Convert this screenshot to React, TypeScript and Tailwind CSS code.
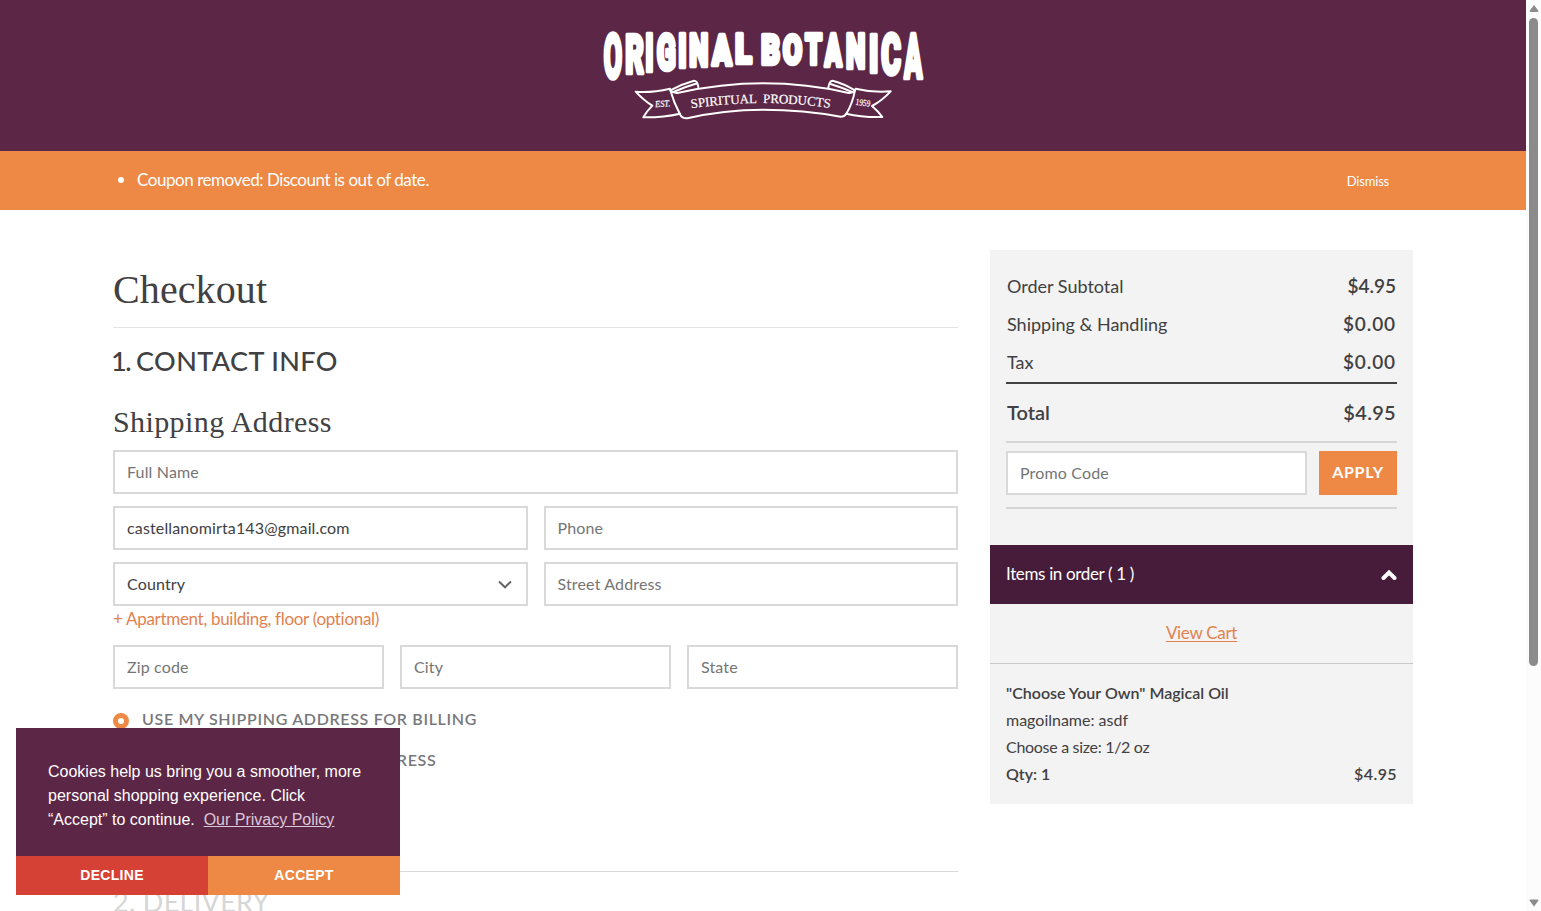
import React from "react";

type Letter = { ch: string; x: number; w: number; bottom: number };

const wordmark: Letter[] = [
  { ch: "O", x: 41, w: 55, bottom: 180 },
  { ch: "R", x: 106, w: 56, bottom: 167 },
  { ch: "I", x: 166, w: 25, bottom: 160 },
  { ch: "G", x: 200, w: 57, bottom: 156 },
  { ch: "I", x: 265, w: 25, bottom: 149 },
  { ch: "N", x: 298, w: 57, bottom: 146 },
  { ch: "A", x: 367, w: 58, bottom: 141 },
  { ch: "L", x: 436, w: 49, bottom: 137 },
  { ch: "B", x: 514, w: 56, bottom: 138 },
  { ch: "O", x: 579, w: 57, bottom: 138 },
  { ch: "T", x: 646, w: 50, bottom: 140 },
  { ch: "A", x: 704, w: 51, bottom: 145 },
  { ch: "N", x: 768, w: 58, bottom: 152 },
  { ch: "I", x: 837, w: 28, bottom: 162 },
  { ch: "C", x: 874, w: 59, bottom: 170 },
  { ch: "A", x: 943, w: 54, bottom: 180 },
];

function Logo() {
  return (
    <svg width="350" height="110" viewBox="-6 0 1050 330" fill="none">
      <g fill="#fff" stroke="#fff" strokeWidth="14" strokeLinejoin="round" fontFamily="Roboto" fontWeight="900">
        {wordmark.map((l, i) => (
          <text
            key={i}
            x={l.x}
            y={l.bottom - 7}
            fontSize={(l.bottom - 51) / 0.711}
            textLength={l.w}
            lengthAdjust="spacingAndGlyphs"
          >
            {l.ch}
          </text>
        ))}
      </g>
      <g stroke="#fff" strokeWidth="6" strokeLinejoin="round" strokeLinecap="round">
        <path d="M241 211 Q250 220 262 219 Q395 190 520 190 Q650 190 776 219 Q788 219 795 211 Q787 252 769 281 Q764 291 752 290 Q640 269 520 269 Q400 269 292 295 Q276 296 270 283 Q252 250 241 211Z" />
        <path d="M241 211 Q275 192 312 182 Q322 182 325 201 M250 216 Q284 201 322 190" />
        <path d="M795 211 Q762 191 728 182 Q718 182 715 203 M786 216 Q756 202 719 191" />
        <path d="M240 206 Q184 219 137 215 Q162 242 187 257 Q170 274 160 292 Q218 293 270 281" />
        <path d="M797 206 Q852 219 902 214 Q876 242 846 258 Q866 275 877 291 Q821 293 768 281" />
      </g>
      <defs>
        <path id="tagline-curve" d="M304 265 Q515 234 722 264" />
      </defs>
      <g fill="#fff" stroke="#fff" strokeWidth="0.6" fontFamily="'Liberation Serif', serif">
        <text fontSize="39" wordSpacing="10" textLength="418" lengthAdjust="spacing">
          <textPath href="#tagline-curve" textLength="418" lengthAdjust="spacing">
            SPIRITUAL PRODUCTS
          </textPath>
        </text>
        <text x="196" y="262" fontSize="28" fontStyle="italic" textLength="46" lengthAdjust="spacingAndGlyphs" transform="rotate(-4 196 262)">
          EST.
        </text>
        <text x="796" y="254" fontSize="28" textLength="44" lengthAdjust="spacingAndGlyphs" transform="rotate(8 796 254)">
          1959
        </text>
      </g>
    </svg>
  );
}

function Field({ label, filled = false, children }: { label: string; filled?: boolean; children?: React.ReactNode }) {
  return (
    <div
      className={
        "flex h-11 min-w-0 flex-1 items-center justify-between border-2 border-[#d9d9d9] bg-white px-3 pb-px text-base tracking-[0.15px] " +
        (filled ? "text-[#414042]" : "text-[#757575]")
      }
    >
      <span>{label}</span>
      {children}
    </div>
  );
}

function SummaryRow({ label, value, wide = false }: { label: string; value: string; wide?: boolean }) {
  return (
    <div className="flex h-[38px] items-center justify-between px-px pb-0.5 text-lg">
      <span>{label}</span>
      <span className={"text-[19px] font-semibold " + (wide ? "tracking-[0.9px]" : "")}>{value}</span>
    </div>
  );
}

function Scrollbar() {
  return (
    <div className="flex h-full w-[15px] shrink-0 flex-col items-center justify-between bg-[#fcfcfc] py-1">
      <div className="flex flex-col items-center gap-1.5">
        <svg width="10" height="8" viewBox="0 0 10 8">
          <path d="M5 1 L9.5 7 Q9.5 8 8 8 H2 Q0.5 8 0.5 7Z" fill="#8b8b8b" />
        </svg>
        <div className="h-[648px] w-[9px] rounded-full bg-[#8b8b8b]" />
      </div>
      <svg width="10" height="8" viewBox="0 0 10 8">
        <path d="M5 7.5 L0.5 1.5 Q0.5 0.5 2 0.5 H8 Q9.5 0.5 9.5 1.5Z" fill="#8b8b8b" />
      </svg>
    </div>
  );
}

function CookieNotice() {
  return (
    <div className="absolute top-[728px] left-4 flex h-[167px] w-96 flex-col bg-[#5c2646] font-['Liberation_Sans',sans-serif] text-white">
      <p className="flex-1 px-8 pt-8 text-base leading-6">
        Cookies help us bring you a smoother, more
        <br />
        personal shopping experience. Click
        <br />
        “Accept” to continue.&nbsp; <a className="text-[#dcc8d8] underline">Our Privacy Policy</a>
      </p>
      <div className="flex h-[39px] text-sm font-bold tracking-[0.3px]">
        <button className="flex-1 bg-[#d54135] pb-0.5">DECLINE</button>
        <button className="flex-1 bg-[#ee8845] pb-0.5">ACCEPT</button>
      </div>
    </div>
  );
}

export default function App() {
  return (
    <div className="relative flex h-[911px] w-[1541px] overflow-hidden bg-white font-['Lato',sans-serif] text-[#414042]">
      <div className="flex h-full w-[1526px] flex-col overflow-hidden">
        <header className="flex h-[151px] shrink-0 justify-center bg-[#5c2646] pt-5">
          <Logo />
        </header>

        <div className="flex h-[59px] shrink-0 items-center justify-between bg-[#ee8845] pr-[137px] pl-[118px] text-white">
          <div className="flex items-center gap-[13px] pb-px text-[17px]">
            <span className="size-1.5 rounded-full bg-white" />
            <span className="tracking-[-0.45px]">Coupon removed: Discount is out of date.</span>
          </div>
          <span className="pt-0.5 text-[13px] tracking-[-0.2px]">Dismiss</span>
        </div>

        <main className="flex items-start gap-8 px-[113px] pt-10">
          <section className="w-[845px] shrink-0">
            <h1 className="flex h-[78px] items-center border-b border-[#e4e4e4] pt-0.5 font-['Liberation_Serif',serif] text-[40px] tracking-[0.1px]">
              Checkout
            </h1>
            <h2 className="flex h-[67px] items-center gap-1.5 text-[27px] font-medium">
              <span className="-ml-0.5 tracking-[-1.5px]">1.</span>
              <span className="tracking-[0.4px]">CONTACT INFO</span>
            </h2>
            <h3 className="flex h-[55px] items-center pb-0.5 font-['Liberation_Serif',serif] text-[30px] tracking-[0.4px]">
              Shipping Address
            </h3>

            <div className="flex flex-col gap-3">
              <div className="flex">
                <Field label="Full Name" />
              </div>
              <div className="flex gap-4">
                <Field label="castellanomirta143@gmail.com" filled />
                <Field label="Phone" />
              </div>
              <div className="flex gap-4">
                <Field label="Country" filled>
                  <svg width="14" height="9" viewBox="0 0 14 9" className="mt-0.5 mr-0.5">
                    <path d="M1 1.5 L7 7.3 L13 1.5" fill="none" stroke="#666" strokeWidth="2" />
                  </svg>
                </Field>
                <Field label="Street Address" />
              </div>
            </div>

            <a className="flex h-[39px] items-start text-[17px] tracking-[-0.31px] text-[#e2824f]">
              + Apartment, building, floor (optional)
            </a>

            <div className="flex gap-4">
              <Field label="Zip code" />
              <Field label="City" />
              <Field label="State" />
            </div>

            <div className="flex flex-col pt-[9px] text-base text-[#77787b]">
              <div className="flex h-[41px] items-center gap-[13px]">
                <span className="mt-1 size-4 rounded-full border-[5px] border-[#ee8845] bg-white" />
                <span className="font-semibold tracking-[0.67px]">USE MY SHIPPING ADDRESS FOR BILLING</span>
              </div>
              <div className="flex h-[41px] items-center gap-[13px]">
                <span className="size-4 rounded-full border-2 border-[#d9d9d9] bg-white" />
                <span className="font-semibold tracking-[0.72px]">USE A DIFFERENT BILLING ADDRESS</span>
              </div>
            </div>

            <h2 className="mt-[91px] flex h-10 items-start border-t border-[#d9d9d9] pt-2.5 text-[27px] tracking-[0.3px] text-[#d6d6d6]">
              2. DELIVERY
            </h2>
          </section>

          <aside className="h-[554px] w-[423px] shrink-0 bg-[#f3f3f3]">
            <div className="flex h-[295px] flex-col px-4 pt-[18px]">
              <div className="border-b-2 border-[#414042]">
                <SummaryRow label="Order Subtotal" value="$4.95" />
                <SummaryRow label="Shipping & Handling" value="$0.00" wide />
                <SummaryRow label="Tax" value="$0.00" wide />
              </div>
              <div className="flex h-[59px] items-center justify-between border-b-2 border-[#d5d6d5] px-px pb-0.5 text-xl font-semibold">
                <span>Total</span>
                <span className="tracking-[0.3px]">$4.95</span>
              </div>
              <div className="flex h-[66px] gap-3 border-b-2 border-[#d5d6d5] pt-2">
                <Field label="Promo Code" />
                <button className="h-11 w-[78px] bg-[#ee8845] pb-0.5 text-base font-bold tracking-[0.7px] text-white">
                  APPLY
                </button>
              </div>
            </div>
            <div className="flex h-[59px] items-center justify-between bg-[#471c3a] px-4 text-[17px] text-white">
              <span className="pb-px tracking-[-0.35px]">Items in order ( 1 )</span>
              <svg width="16" height="12" viewBox="0 0 16 12">
                <path d="M2.5 9 L8 3.5 L13.5 9" fill="none" stroke="#fff" strokeWidth="4" strokeLinecap="round" />
              </svg>
            </div>
            <div className="flex h-[60px] items-center justify-center border-b border-[#c9c9c9] pb-0.5 text-[17px] tracking-[-0.3px] text-[#e2824f]">
              <a className="underline underline-offset-2">View Cart</a>
            </div>
            <div className="px-4 pt-[15px] text-base leading-[27px]">
              <p className="font-semibold">"Choose Your Own" Magical Oil</p>
              <p>magoilname: asdf</p>
              <p className="tracking-[-0.3px]">Choose a size: 1/2 oz</p>
              <p className="flex justify-between font-semibold">
                <span>Qty: 1</span>
                <span className="tracking-[0.4px]">$4.95</span>
              </p>
            </div>
          </aside>
        </main>
      </div>

      <Scrollbar />
      <CookieNotice />
    </div>
  );
}
